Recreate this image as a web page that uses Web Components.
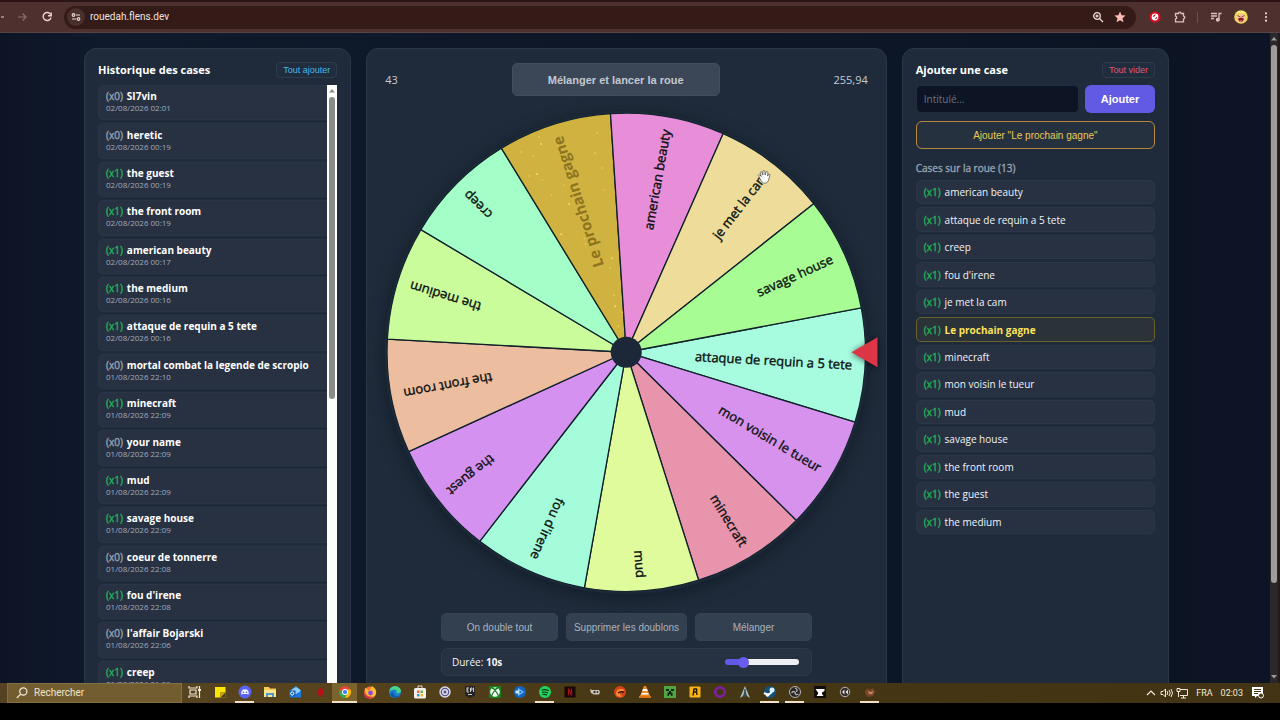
<!DOCTYPE html>
<html lang="fr">
<head>
<meta charset="utf-8">
<title>Roue</title>
<style>
  html, body { margin: 0; height: 100%; }
  body { background: #000; font-family: "Open Sans", "Noto Sans", sans-serif; color: #f1f4f8; overflow: hidden; }
</style>
</head>
<body>
<wheel-app></wheel-app>
<script>
const define = (name, render) => customElements.define(name, class extends HTMLElement {
  connectedCallback() {
    if (this.shadowRoot) return;
    this.attachShadow({ mode: 'open' }).innerHTML = render(this);
  }
});

/* ---------- Browser toolbar ---------- */
define('browser-bar', () => `
<style>
  :host { display: flex; align-items: center; height: 33px; flex: none; box-sizing: border-box; background: #4e302e; border-top: 2px solid #2c1415; border-bottom: 1px solid #5a4443; color: #ecd9d6; padding-right: 2px; }
  button { all: unset; width: 25px; height: 24px; display: grid; place-items: center; flex: none; }
  svg { display: block; }
  .back { width: 9px; }
  .omni { flex: 1; height: 23px; border-radius: 12px; background: #341b18; display: flex; align-items: center; margin: 0 6px 0 5px; padding: 0 5px 0 3px; }
  .site { width: 18px; height: 18px; border-radius: 9px; background: #4a302d; margin-right: 5px; }
  input { all: unset; flex: 1; font: 10px/20px Roboto, sans-serif; color: #f2e2df; }
  .small { width: 22px; }
  i { width: 1px; height: 11px; background: #6f504d; margin: 0 5px; }
</style>
<button class="back" aria-label="Retour"><svg width="8" height="12" viewBox="0 0 8 12" fill="none" stroke="#c9b2af" stroke-width="1.2"><path d="M-2 6h5"/></svg></button>
<button aria-label="Avancer"><svg width="12" height="12" viewBox="0 0 12 12" fill="none" stroke="#8c6e6b" stroke-width="1.2"><path d="M2 6h8M6.500 2.500 10 6 6.500 9.500"/></svg></button>
<button aria-label="Actualiser"><svg width="12" height="12" viewBox="0 0 12 12" fill="none" stroke="#ecd9d6" stroke-width="1.4"><path d="M9.600 3.500A4 4 0 1 0 10 6.600"/><path d="M10.200 1.500v3.200H7"/></svg></button>
<div class="omni">
  <button class="site" aria-label="Informations du site"><svg width="10" height="10" viewBox="0 0 10 10" fill="none" stroke="#ecd9d6" stroke-width="1.200"><circle cx="2.500" cy="3" r="1.300"/><path d="M5 3h4M1 7h4"/><circle cx="7.500" cy="7" r="1.300"/></svg></button>
  <input aria-label="Adresse" value="rouedah.flens.dev">
  <button class="small" aria-label="Zoom"><svg width="12" height="12" viewBox="0 0 12 12" fill="none" stroke="#ecd9d6" stroke-width="1.300"><circle cx="5" cy="5" r="3.300"/><path d="M7.500 7.500 11 11M3.500 5h3M5 3.500v3"/></svg></button>
  <button class="small" aria-label="Favori"><svg width="12" height="12" viewBox="0 0 12 12" fill="#fbbcb6"><path d="M6 .5 7.600 4.300l4 .3-3.100 2.700 1 4L6 9.200 2.500 11.300l1-4L.4 4.600l4-.3z"/></svg></button>
</div>
<button aria-label="Extension"><svg width="12" height="12" viewBox="0 0 12 12"><circle cx="6" cy="6" r="5.600" fill="#d40e22"/><circle cx="6" cy="6" r="3.400" fill="#fff"/><path d="M3.800 5.500Q4.500 3.500 7 3.600L5 6z" fill="#d40e22"/><path d="M5.500 8.300 8 5.500q.5 2.500-2.500 2.800z" fill="#d40e22"/></svg></button>
<button aria-label="Extensions"><svg width="12" height="12" viewBox="0 0 12 12" fill="none" stroke="#d9c2bf" stroke-width="1.300"><path d="M1.500 2.500h3a1.300 1.300 0 0 1 2.600 0h2.400v2.700a1.300 1.300 0 0 1 0 2.600v3h-8v-3a1.300 1.300 0 0 0 0-2.600z"/></svg></button>
<i></i>
<button aria-label="Médias"><svg width="12" height="12" viewBox="0 0 12 12" fill="none" stroke="#d9c2bf" stroke-width="1.300"><path d="M1 2.500h6M1 5h6M1 7.500h3M9 8.500V2.500h2.500"/><circle cx="7.800" cy="8.700" r="1.300" fill="#d9c2bf"/></svg></button>
<button aria-label="Profil"><svg width="14" height="14" viewBox="0 0 14 14"><circle cx="7" cy="7" r="6.800" fill="#f2d94e"/><path d="M2 6q5-4 10 0l-1 5q-4 3-8 0z" fill="#f3c2a0"/><path d="M3.500 5.500l3 1.500M10.500 5.500l-3 1.500" stroke="#8a4c30"/><path d="M4 8.500q3-1.500 6 0-1 3.500-3 3.500T4 8.500z" fill="#8a1c22"/><path d="M5.500 11q1.500-1.500 3 0-1.500 1.500-3 0z" fill="#f08a8a"/><path d="M3 3l2-2 1 2 2-2 1 2 2-1" stroke="#fff6b0" fill="none"/></svg></button>
<button aria-label="Menu"><svg width="12" height="12" viewBox="0 0 12 12" fill="#ecd9d6"><circle cx="6" cy="2.300" r="1.100"/><circle cx="6" cy="6" r="1.100"/><circle cx="6" cy="9.700" r="1.100"/></svg></button>
`);

/* ---------- Card panel ---------- */
define('panel-card', () => `
<style>
  :host { display: flex; flex-direction: column; min-width: 0; box-sizing: border-box; padding: 13px 13px 0; background: #1f2b3a; border: 1px solid #2b3748; border-radius: 12px; }
</style><slot></slot>`);

define('panel-title', el => `
<style>
  :host { display: flex; justify-content: space-between; align-items: center; height: 16px; margin-bottom: 7px; }
  h2 { margin: 0; font-size: 11px; line-height: 16px; font-weight: 700; color: #fff; }
  button { box-sizing: border-box; height: 16px; padding: 0 6px; border: 1px solid #2e3b4b; border-radius: 4px; background: #1f2d3e; color: ${el.getAttribute('tone')}; font: 9px/14px "Liberation Sans", Arial, sans-serif; }
</style>
<h2>${el.getAttribute('heading')}</h2><button>${el.getAttribute('action')}</button>`);

/* ---------- Scroll bar ---------- */
define('scroll-track', () => `
<style>
  :host { display: flex; flex-direction: column; align-items: center; flex: none; background: var(--track, #fff); }
  svg { display: block; height: 12px; flex: none; }
  div { flex: 1; display: flex; min-height: 0; }
  i { width: 6px; height: var(--thumb); background: var(--thumb-color, #8b8b8b); border-radius: 3px; }
</style>
<svg width="8" viewBox="0 0 8 12" fill="var(--thumb-color, #8b8b8b)"><path d="M1 7.500 4 4l3 3.500z"/></svg>
<div><i></i></div>
<svg width="8" viewBox="0 0 8 12" fill="var(--thumb-color, #8b8b8b)"><path d="M1 4l3 3.500L7 4z"/></svg>`);

/* ---------- History ---------- */
const historyRows = [
  [0, 'SI7vin', '02/08/2026 02:01'], [0, 'heretic', '02/08/2026 00:19'], [1, 'the guest', '02/08/2026 00:19'],
  [1, 'the front room', '02/08/2026 00:19'], [1, 'american beauty', '02/08/2026 00:17'], [1, 'the medium', '02/08/2026 00:16'],
  [1, 'attaque de requin a 5 tete', '02/08/2026 00:16'], [0, 'mortal combat la legende de scropio', '01/08/2026 22:10'],
  [1, 'minecraft', '01/08/2026 22:09'], [0, 'your name', '01/08/2026 22:09'], [1, 'mud', '01/08/2026 22:09'],
  [1, 'savage house', '01/08/2026 22:09'], [0, 'coeur de tonnerre', '01/08/2026 22:08'], [1, "fou d'irene", '01/08/2026 22:08'],
  [0, "l'affair Bojarski", '01/08/2026 22:06'], [1, 'creep', '01/08/2026 21:59']];

define('history-list', () => `
<style>
  :host { display: flex; }
  ol { flex: 1; min-width: 0; list-style: none; margin: 0; padding: 0; display: grid; grid-auto-rows: 1fr; gap: 3px; min-height: 611px; }
  li { box-sizing: border-box; padding: 0 7px 3px; border: 1px solid #2a3646; border-right: 0; border-radius: 5px 0 0 5px; background: #273142; display: flex; flex-direction: column; justify-content: center; white-space: nowrap; }
  p { margin: 0; font-size: 10px; line-height: 14px; font-weight: 700; color: #fff; display: flex; gap: 4px; }
  span { font-weight: 400; -webkit-text-stroke: .35px; color: #98a3b3; }
  .on { color: #22b35a; }
  time { font-size: 8px; line-height: 10px; color: #a0aaba; }
  scroll-track { width: 10px; --thumb: 302px; }
</style>
<ol>${historyRows.map(([n, t, d]) => `<li><p><span class="${n ? 'on' : ''}">(x${n})</span>${t}</p><time>${d}</time></li>`).join('')}</ol>
<scroll-track></scroll-track>`);

/* ---------- Wheel ---------- */
const slices = [
  ['attaque de requin a 5 tete', '#a7fce0'], ['mon voisin le tueur', '#d792ee'], ['minecraft', '#e894ac'],
  ['mud', '#dffb9b'], ["fou d'irene", '#a4fcdb'], ['the guest', '#d491ef'], ['the front room', '#edbda0'],
  ['the medium', '#cbfc9b'], ['creep', '#a3fec8'], ['Le prochain gagne', '#cfb23f'], ['american beauty', '#e88ed9'],
  ['je met la cam', '#eedc9a'], ['savage house', '#a7fd94']];

const drawWheel = () => {
  const R = 239, step = 360 / slices.length, first = -10.7;
  const pt = (a, r) => [r * Math.cos(a * Math.PI / 180), r * Math.sin(a * Math.PI / 180)].map(v => v.toFixed(2)).join(' ');
  const wedges = slices.map(([, c], i) => {
    const a = first + i * step;
    return `<path d="M0 0L${pt(a, R)}A${R} ${R} 0 0 1 ${pt(a + step, R)}Z" fill="${c}"/>`;
  }).join('');
  const labels = slices.map(([t], i) => {
    const gold = t.startsWith('Le ');
    return `<text class="${gold ? 'gold' : ''}" x="226" y="5" transform="rotate(${(first + (i + .5) * step).toFixed(2)})">${t}</text>`;
  }).join('');
  const sparks = [[-67,-214],[-29,-219],[-87,-215],[-85,-208],[-105,-200],[-97,-176],[-89,-178],[-84,-172],[-93,-196],[-59,-186],[-24,-184],[-22,-162],[-57,-148],[-62,-167],[-46,-137],[-40,-131],[-42,-114],[-41,-108],[-14,-94],[-16,-84],[-12,-57],[-11,-46],[-4,-40],[-8,-26],[-65,-118],[-75,-157],[-31,-199]]
    .map(([x, y], i) => `<circle cx="${x}" cy="${y}" r="${i % 3 ? .7 : 1}"/>`).join('');
  return `<g stroke="#10202a" stroke-width="1.300">${wedges}</g><circle r="240" fill="none" stroke="#1c2936" stroke-width="2"/>
    <g fill="#f7dc62">${sparks}</g>${labels}<circle r="15.500" fill="#1c2738"/>`;
};

define('fortune-wheel', () => `
<style>
  :host { display: block; }
  svg { display: block; width: 100%; height: auto; overflow: visible; }
  text { font: 400 13px "Open Sans", sans-serif; text-anchor: end; fill: #0d1210; stroke: #0d1210; stroke-width: .4px; }
  .gold { font-weight: 700; font-size: 15px; fill: #8d7420; stroke: none; }
  .disc { filter: drop-shadow(0 4px 8px rgba(10, 18, 32, .6)); }
  .arrow { filter: drop-shadow(0 1px 3px rgba(0, 0, 0, .6)); }
</style>
<svg viewBox="-252 -252 504 504" role="img" aria-label="Roue">
  <circle class="disc" r="242" fill="#1b2736"/>
  ${drawWheel()}
  <path class="arrow" d="M225 0 251-15V15Z" fill="#dc3545"/>
  <g transform="translate(131 -182)" fill="#fff" stroke="#4a4a4a" stroke-width=".7"><path d="M2 7 .8 5.500Q1 4 2.500 5L4 6.500 2.700 2.500Q3.500 1 4.600 2.300L5.600 5 5.500 1Q6.500-.3 7.400 1L7.800 5 8.800 1.600Q10 .8 10.500 2.200L10.200 6 11.300 4Q12.600 3.500 12.500 5L11 10.500Q9.500 14 6 12.800 3.500 12 2 7z"/></g>
</svg>`);

define('wheel-stage', () => `
<style>
  :host { display: flex; flex-direction: column; }
  header { display: flex; justify-content: space-between; align-items: center; height: 33px; margin: 1px 5px 4px; font-size: 11px; line-height: 16px; color: #c3cbd6; }
  button { border: 1px solid #364252; border-radius: 5px; background: #334050; color: #a9b2bf; font: 10px "Liberation Sans", Arial, sans-serif; padding: 0; white-space: nowrap; }
  header button { width: 208px; height: 33px; font-size: 11px; font-weight: 700; color: #c3c9d2; background: #3b4656; border-color: #424d5e; }
  fortune-wheel { margin: 0 -6px; }
  footer { width: 371px; align-self: center; margin-top: 9px; display: grid; gap: 7px; }
  .row { display: grid; grid-template-columns: 117px 121px 117px; gap: 8px; }
  .row button { height: 28px; }
  label { box-sizing: border-box; display: flex; align-items: center; justify-content: space-between; height: 28px; border: 1px solid #2e3a4b; border-radius: 7px; background: #263141; padding: 0 12px 0 10px; font-size: 10px; color: #f1f4f8; }
  input { appearance: none; width: 74px; height: 6px; margin: 0; border-radius: 3px; background: linear-gradient(90deg, #6459e6 24%, #eef0f4 24%); }
  input::-webkit-slider-thumb { appearance: none; width: 11px; height: 11px; border-radius: 6px; background: #6a5cf0; }
</style>
<header><output>43</output><button>Mélanger et lancer la roue</button><output>255,94</output></header>
<fortune-wheel></fortune-wheel>
<footer>
  <div class="row"><button>On double tout</button><button>Supprimer les doublons</button><button>Mélanger</button></div>
  <label><span>Durée: <b>10s</b></span><input type="range" min="5" max="35" value="11"></label>
</footer>`);

/* ---------- Add a case ---------- */
const cases = ['american beauty', 'attaque de requin a 5 tete', 'creep', "fou d'irene", 'je met la cam', 'Le prochain gagne',
  'minecraft', 'mon voisin le tueur', 'mud', 'savage house', 'the front room', 'the guest', 'the medium'];

define('case-form', () => `
<style>
  :host { display: grid; gap: 8px; }
  form { display: grid; grid-template-columns: 1fr 70px; gap: 6px; }
  input { box-sizing: border-box; min-width: 0; height: 28px; border: 1px solid #1f2c3d; border-radius: 5px; background: #0d1525; padding: 0 7px; color: #fff; font: 10px "Open Sans", sans-serif; }
  input::placeholder { color: #6b7280; }
  button { border: 0; border-radius: 6px; padding: 0; font-family: "Liberation Sans", Arial, sans-serif; }
  form button { background: #635ae4; color: #fff; font-size: 11px; font-weight: 700; }
  .next { height: 28px; border: 1px solid #b5893c; background: #263140; color: #eccb55; font-size: 10px; }
</style>
<form onsubmit="return false"><input aria-label="Intitulé" placeholder="Intitulé..."><button>Ajouter</button></form>
<button class="next">Ajouter "Le prochain gagne"</button>`);

define('case-list', () => `
<style>
  :host { display: block; margin-top: 11px; }
  h3 { margin: 0 0 4px; font-size: 10px; line-height: 16px; font-weight: 400; -webkit-text-stroke: .35px; color: #98a3b3; }
  ul { list-style: none; margin: 0; padding: 0; display: grid; grid-auto-rows: 1fr; gap: 3px; min-height: 354px; }
  li { box-sizing: border-box; display: flex; align-items: center; gap: 4px; padding: 0 7px; border: 1px solid #2b3747; border-radius: 5px; background: #273142; font-size: 10px; line-height: 14px; color: #f1f4f8; }
  span { font-weight: 400; -webkit-text-stroke: .35px; color: #22b35a; }
  .gold { background: #2b3238; border-color: #6b612f; color: #fbe25c; font-weight: 700; }
</style>
<h3>Cases sur la roue (13)</h3>
<ul>${cases.map(c => `<li class="${c.startsWith('Le ') ? 'gold' : ''}"><span>(x1)</span>${c}</li>`).join('')}</ul>`);

/* ---------- Task bar ---------- */
const icons = [
  ['Bureaux', '<g fill="none" stroke="#f1ead8" stroke-width="1.200"><path d="M1 1v2h8V1M1 13v-2h8v2M2 5h6v4H2zM11.500 1v12"/><path d="M10 5h3" stroke-width="2"/></g>'],
  ['Notes', '<path d="M2 2h10.500v10.500H2z" fill="#fbe50b"/><path d="M7.500 7.500h5v5h-5z" fill="#453a10"/><path d="M7.500 12.500v-5h5z" fill="#c9a90a"/>'],
  ['Discord', '<circle cx="7" cy="7" r="6.500" fill="#5865f2"/><path d="M3.500 9.500Q3 6 5 4.500h4Q11 6 10.500 9.500L9 9H5z" fill="#fff"/><circle cx="5.500" cy="7.300" r=".9" fill="#5865f2"/><circle cx="8.500" cy="7.300" r=".9" fill="#5865f2"/>', 1],
  ['Explorateur', '<path d="M1 2h5l1 1.500h6V12H1z" fill="#f4cd5a"/><path d="M1 5h12v7H1z" fill="#ffe38e"/><path d="M3 8h8v4H3z" fill="#4f9bcd"/><path d="M5 10h4v2H5z" fill="#ffe38e"/>'],
  ['Outlook', '<path d="M2 5.500 8 1l5 4.500V12H2z" fill="#38a5ea"/><path d="M4 4.500 8 2.500l4 2V9H4z" fill="#8fd0fa"/><path d="M2 12.500 13 6v6.500z" fill="#1e78d8"/><rect x="1" y="5.500" width="6.500" height="6" fill="#1362b5"/><circle cx="4.200" cy="8.500" r="1.600" fill="none" stroke="#fff"/>'],
  ['Média', '<path d="M7 3l3 1v5l-2 3-3-2V5z" fill="#b5101a"/>'],
  ['Chrome', '<circle cx="7" cy="7" r="6" fill="#e94435"/><path d="M1.500 4.500A6 6 0 0 0 7 13L9.500 8.500 4.500 8z" fill="#34a853"/><path d="M12.500 4.500A6 6 0 0 1 7 13l2.500-4.500L9 4.500z" fill="#fbbc05"/><circle cx="7" cy="7" r="2.700" fill="#4285f4" stroke="#fff"/>', 2],
  ['Firefox', '<circle cx="7" cy="7.500" r="6" fill="#ff7139"/><path d="M2 3q3 1 4 3l3-5q5 3 4 8-2 4-6 4.500Q2 12 2 3z" fill="#ffbd2e"/><path d="M1.500 6Q3 13 11 11.500 4 16 1.500 10z" fill="#f0264e"/><circle cx="7.500" cy="8" r="2.400" fill="#8948e0"/>'],
  ['Edge', '<circle cx="7" cy="7" r="6" fill="#1b7fd4"/><path d="M1 7q1-6 6.500-6Q13 2 13 6.500 12 9 8.500 8q1-4-3-3.500Q2 5 1 7z" fill="#4bd58b"/><path d="M5 7q0 4 6 4.500-5 3-8-1Q2 7 5 7z" fill="#0d59a4"/>'],
  ['Store', '<rect x="1" y="3" width="12" height="10.500" rx="1.500" fill="#f5f2ec"/><path d="M5 3V1h4v2" stroke="#e3ded2" fill="none"/><path d="M4 5.500h2.500V8H4z" fill="#e8664e"/><path d="M7.500 5.500H10V8H7.500z" fill="#71b243"/><path d="M4 9h2.500v2.500H4z" fill="#2c9bd8"/><path d="M7.500 9H10v2.500H7.500z" fill="#f2b52c"/>'],
  ['Lecteur', '<circle cx="7" cy="7" r="5.700" fill="#dcdce8"/><circle cx="7" cy="7" r="3.700" fill="none" stroke="#57538a" stroke-width="1.200"/><circle cx="7" cy="7" r="1.500" fill="#57538a"/>'],
  ['Epic', '<path d="M2 1h10v9.500L7 13l-5-2.500z" fill="#242424"/><path d="M4 2.500v4.500M4 3h2M4 5h1.500M4 7h2M7.500 7V3H9v2H7.500M10.500 2.500V7M5 9.500h4" stroke="#ddd" stroke-width=".9" fill="none"/>'],
  ['Xbox', '<rect x="1" y="1" width="12" height="12" rx="1" fill="#14821d"/><circle cx="7" cy="7" r="4.800" fill="#fff"/><path d="M3.500 11Q5 7 7 5.500 9 7 10.500 11M4 3q2 .5 3 2 1-1.500 3-2" stroke="#14821d" stroke-width="1.300" fill="none"/>'],
  ['Cinéma', '<circle cx="7" cy="7" r="6" fill="#1563c1"/><path d="M5 3l6 4-6 4z" fill="#75c4ff"/><path d="M2.500 5.500h4v3h-4z" fill="#cce9ff"/><path d="M6.500 5.500 9 7 6.500 8.500z" fill="#1563c1"/>'],
  ['Spotify', '<circle cx="7" cy="7" r="6" fill="#1ed760"/><path d="M3.500 5q4-1 7.500.8M4 7.300q3-.8 6 .7M4.500 9.500q2.500-.5 4.500.6" stroke="#13351e" stroke-width="1.200" fill="none"/>', 1],
  ['Netflix', '<rect x="1.500" y="1.500" width="11" height="11" fill="#180708"/><path d="M5.500 10.500v-7l3 7v-7" stroke="#a00d16" stroke-width="1.300" fill="none"/>'],
  ['Jeu', '<path d="M2 4l2 1h7l1 2-1 2.500H6L3 8z" fill="#cfc8bc"/><circle cx="6.500" cy="7" r="1.200" fill="#333"/><circle cx="9.500" cy="7" r="1" fill="#333"/>'],
  ['Phénix', '<circle cx="7" cy="7" r="6" fill="#d3421a"/><path d="M3 9q0-5 5-5 4 0 3 3-3-1-4 1t3 3Q4 13 3 9z" fill="#f98e33"/><path d="M5 8q3-2 6-1" stroke="#411408" stroke-width="1.500" fill="none"/>'],
  ['VLC', '<path d="M6 1h2l4 10H2z" fill="#f08a24"/><path d="M5 4h4l.7 2H4.300zM3.800 8h6.400l.5 1.500H3.300z" fill="#fff"/><path d="M1 11h12v2H1z" fill="#d9741a"/>'],
  ['Minecraft', '<rect x="1" y="1" width="12" height="12" fill="#4ea742"/><path d="M3 4h3v2H3zM8 4h3v2H8zM6 6h2v1.500h1.500V11H8V9.500H6V11H4.500V7.500H6z" fill="#11260f"/>'],
  ['Rockstar', '<rect x="1.500" y="1.500" width="11" height="11" rx="1" fill="#fcb317"/><path d="M5 10.500 6 4h2.500q1 1.500-.5 3H6l2.500 0 .5 3" stroke="#251703" stroke-width="1.400" fill="none"/>'],
  ['Anneau', '<circle cx="7" cy="7" r="4.700" fill="none" stroke="#7a219b" stroke-width="2.800"/>'],
  ['Ark', '<path d="M7 1 12 13l-3-2-2-6-2 6-3 2z" fill="#aebfc8"/><path d="M7 4v8" stroke="#2c5566" stroke-width="1.500"/>'],
  ['Steam', '<circle cx="7" cy="7" r="6" fill="#15517e"/><path d="M1 8l4 2 4-3" stroke="#fff" stroke-width="2" fill="none"/><circle cx="9" cy="5" r="2.500" fill="#dff1ff"/><circle cx="4.500" cy="10" r="1.800" fill="#fff"/>', 1],
  ['OBS', '<circle cx="7" cy="7" r="5.500" fill="#29262a" stroke="#b9b4b0"/><path d="M7 3q3 1 1.500 4M3.500 8q2-3 4 0M10.500 9Q7 11 7 7" stroke="#b9b4b0" stroke-width="1.300" fill="none"/>', 1],
  ['Enclume', '<rect x="1" y="1" width="12" height="12" fill="#120d08"/><path d="M2.500 4h9v2L9 7.500V9l1.500 2h-7L5 9V7.500z" fill="#fff"/>'],
  ['Audio', '<circle cx="7" cy="7" r="4.700" fill="#302d2a" stroke="#b9b4b0"/><path d="M6.500 4.500v5L4 7zM10 4.500v5L7.500 7z" fill="#e5e0dc"/>'],
  ['Sanglier', '<path d="M2 6l3-3 1 2 4-2 2 4-2 4-5 1-3-3z" fill="#7c4529"/><path d="M5 6l3 1 3-1-2 3H6z" fill="#c08a60"/>', 1]];

define('task-bar', () => `
<style>
  :host { display: flex; align-items: stretch; height: 20px; flex: none; background: linear-gradient(90deg, #544222, #57441d 25%, #463714 50%, #423414 100%); color: #f1ead8; }
  .search { box-sizing: border-box; display: flex; align-items: center; gap: 6px; width: 175px; margin-left: 7px; padding: 0 8px; background: #725d30; border: 1px solid #83703f; }
  .search input { all: unset; flex: 1; min-width: 0; font: 10px/16px Roboto, sans-serif; color: #efe3c8; }
  .search input::placeholder { color: #efe3c8; }
  nav { display: flex; flex: 1; }
  button { all: unset; box-sizing: border-box; width: 25px; display: grid; place-items: center; border-bottom: 2px solid transparent; }
  .open { background: linear-gradient(#f3dfc2, #f3dfc2) bottom / 19px 2px no-repeat border-box; }
  .active { background: #7a632c; border-bottom-color: #f3dfc2; }
  .tray { display: flex; align-items: center; font: 9px/14px Roboto, sans-serif; padding-right: 15px; }
  .tray svg { display: block; }
  .tray span { margin-left: 8px; }
</style>
<label class="search"><svg width="12" height="12" viewBox="0 0 12 12" fill="none" stroke="#f1ead8" stroke-width="1.200"><circle cx="7.300" cy="4.500" r="3.600"/><path d="M4.600 7.200 .8 11"/></svg><input aria-label="Rechercher" placeholder="Rechercher"></label>
<nav>${icons.map(([n, p, s]) => `<button aria-label="${n}" class="${['', 'open', 'active'][s || 0]}"><svg width="14" height="14" viewBox="0 0 14 14">${p}</svg></button>`).join('')}</nav>
<div class="tray">
  <svg width="10" height="12" viewBox="0 0 10 12" fill="none" stroke="#f1ead8" stroke-width="1.200"><path d="M1 8l4-4 4 4"/></svg>
  <svg width="20" height="12" viewBox="2 0 20 12" fill="none" stroke="#f1ead8"><path d="M7 4.500h2L11.500 2v8L9 7.500H7zM13 4q1.500 2 0 4M15 3q2.500 3 0 6M17 2q3 4 0 8"/></svg>
  <svg width="12" height="12" viewBox="0 0 12 12" fill="none" stroke="#f1ead8"><path d="M4 2.500h7.500v6H4M7.500 8.500V11M5 11h5M1 1.500h3v3H1zM2.500 4.500V10"/></svg>
  <span>FRA</span><span>02:03</span><span><svg width="14" height="14" viewBox="0 0 14 14"><path d="M1 1h11v9H6l-2 2v-2H1z" fill="#fff"/><path d="M3 3.500h7M3 5.500h7M3 7.500h4" stroke="#4a3a17"/><circle cx="10" cy="9.500" r="2.500" fill="#4a3a17" stroke="#fff"/></svg></span>
</div>`);

/* ---------- Page ---------- */
define('wheel-app', () => `
<style>
  :host { display: flex; flex-direction: column; height: 100vh; box-sizing: border-box; padding-bottom: 17px; }
  .view { flex: 1; min-height: 0; display: flex; overflow: hidden; background: #0e1627; border-right: 2px solid #241a1c; }
  main { flex: 1; min-width: 0; display: grid; grid-template-columns: 267fr 520fr 267fr; gap: 15px; padding: 15px 101px 0 84px; align-items: stretch; background: linear-gradient(90deg, #0d1426, #0f1a2c 8%, #0c1424 92%, #0d1426); }
  .view > scroll-track { width: 8px; --track: #29292b; --thumb: 538px; --thumb-color: #9c9c9c; }
</style>
<browser-bar></browser-bar>
<div class="view">
  <main>
    <panel-card><panel-title heading="Historique des cases" action="Tout ajouter" tone="#46b9ef"></panel-title><history-list></history-list></panel-card>
    <panel-card><wheel-stage></wheel-stage></panel-card>
    <panel-card><panel-title heading="Ajouter une case" action="Tout vider" tone="#e4566f"></panel-title><case-form></case-form><case-list></case-list></panel-card>
  </main>
  <scroll-track></scroll-track>
</div>
<task-bar></task-bar>`);
</script>
</body>
</html>
